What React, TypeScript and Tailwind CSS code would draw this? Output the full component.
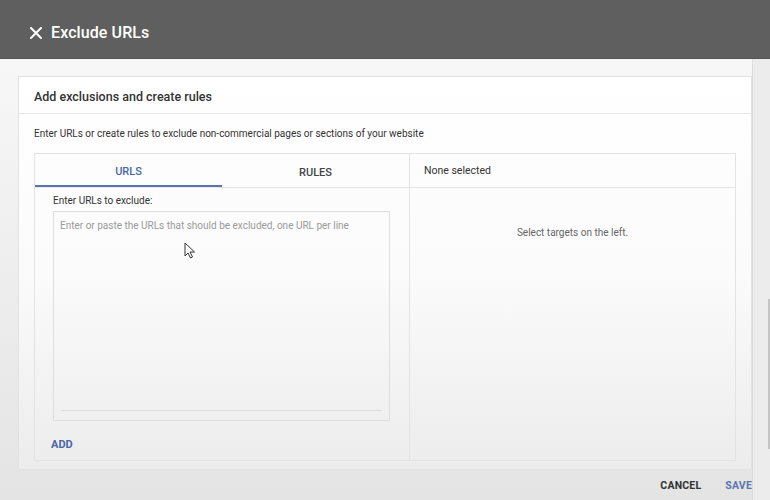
import React from "react";

export default function App() {
  return (
    <div className="w-[770px] h-[500px] flex flex-col overflow-hidden" style={{ fontFamily: "Roboto, 'Liberation Sans', sans-serif" }}>
      {/* Header */}
      <div className="h-[59px] shrink-0 bg-[#5f5f5f] flex items-center pl-[30px] pt-[8px] border-b border-[#555]">
        <svg width="12" height="12" viewBox="0 0 12 12" className="mr-[9px]">
          <path d="M1 1L11 11M11 1L1 11" stroke="#ffffff" strokeWidth="2" strokeLinecap="square" />
        </svg>
        <span className="text-white text-[16px] font-medium tracking-[0.1px]">Exclude URLs</span>
      </div>

      {/* Body */}
      <div className="flex-1 min-h-0 flex bg-gradient-to-b from-[#f7f7f7] to-[#e4e4e4]">
        <div className="flex-1 flex flex-col pl-[18px] pt-[17px]">
          {/* Card */}
          <div className="h-[394px] shrink-0 flex flex-col border border-[#e2e2e2] bg-gradient-to-b from-[#ffffff] via-[#fbfbfb] to-[#ececec]">
            <div className="h-[37px] shrink-0 flex items-center pl-[15px] pt-[4px] border-b border-[#e6e6e6]">
              <span className="text-[12.5px] font-medium text-[#333]">Add exclusions and create rules</span>
            </div>
            <div className="h-[39px] shrink-0 flex items-center pl-[15px]">
              <span className="text-[10px] text-[#333]">Enter URLs or create rules to exclude non-commercial pages or sections of your website</span>
            </div>
            {/* Inner box */}
            <div className="mx-[15px] h-[308px] flex border border-[#e3e3e3]">
              {/* Left column */}
              <div className="w-[375px] flex flex-col border-r border-[#e3e3e3]">
                <div className="h-[34px] shrink-0 flex border-b border-[#e6e6e6]">
                  <div className="w-[187px] flex items-center justify-center pt-[6px] border-b-2 border-[#5a76b0]">
                    <span className="text-[11px] font-medium text-[#4a66a6]">URLS</span>
                  </div>
                  <div className="flex-1 flex items-center justify-center pt-[6px]">
                    <span className="text-[11px] font-medium text-[#444]">RULES</span>
                  </div>
                </div>
                <div className="pl-[18px] pr-[19px] flex flex-col">
                  <div className="h-[23px] flex items-center pt-[1px]">
                    <span className="text-[10px] text-[#333]">Enter URLs to exclude:</span>
                  </div>
                  <div className="h-[210px] border border-[#dedede] flex flex-col px-[6px] pt-[6px] pb-[9px]">
                    <span className="text-[10px] text-[#9a9a9a]">Enter or paste the URLs that should be excluded, one URL per line</span>
                    <div className="flex-1 relative">
                      <svg width="12" height="17" viewBox="0 0 12 17" className="absolute left-[124px] top-[9px]">
                        <path d="M1 1V14L4 11L6.5 16L8.5 15L6 10H10.5Z" fill="#fff" stroke="#333" strokeWidth="1" strokeLinejoin="round" />
                      </svg>
                    </div>
                    <div className="h-px bg-[#dcdcdc] mx-[1px]" />
                  </div>
                  <div className="h-[45px] flex items-center pt-[3px]">
                    <span className="text-[11px] font-bold text-[#4a66a6] -ml-[2px]">ADD</span>
                  </div>
                </div>
              </div>
              {/* Right column */}
              <div className="flex-1 flex flex-col">
                <div className="h-[34px] shrink-0 flex items-center pl-[14px] border-b border-[#e6e6e6]">
                  <span className="text-[10.5px] text-[#333]">None selected</span>
                </div>
                <div className="h-[88px] flex items-center justify-center">
                  <span className="text-[10px] text-[#666]">Select targets on the left.</span>
                </div>
              </div>
            </div>
          </div>
          {/* Footer */}
          <div className="flex-1 flex items-center justify-end pt-[2px] gap-[24px]">
            <span className="text-[10.5px] font-bold text-[#333] tracking-[0.2px]">CANCEL</span>
            <span className="text-[10.5px] font-bold text-[#5a76b0] tracking-[0.2px]">SAVE</span>
          </div>
        </div>
        {/* Right strip */}
        <div className="w-[18px] flex justify-end border-l border-[#dcdcdc] bg-[#ececec]">
          <div className="w-[2px] h-[150px] mt-[240px] bg-[#c4c4c4]" />
        </div>
      </div>
    </div>
  );
}
